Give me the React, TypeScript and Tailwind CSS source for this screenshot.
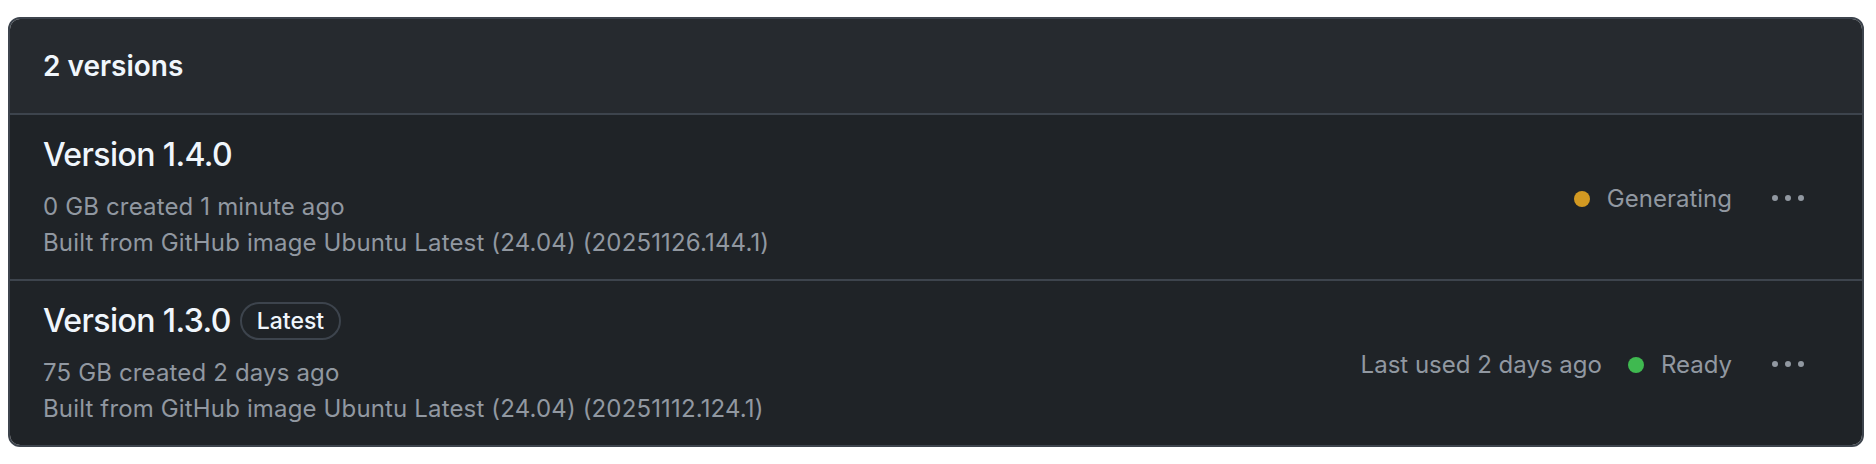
import React from "react"

type Version = {
  name: string
  latest?: boolean
  size: string
  created: string
  image: string
  lastUsed?: string
  status: "generating" | "ready"
}

const versions: Version[] = [
  {
    name: "Version 1.4.0",
    size: "0 GB",
    created: "1 minute ago",
    image: "Built from GitHub image Ubuntu Latest (24.04) (20251126.144.1)",
    status: "generating",
  },
  {
    name: "Version 1.3.0",
    latest: true,
    size: "75 GB",
    created: "2 days ago",
    image: "Built from GitHub image Ubuntu Latest (24.04) (20251112.124.1)",
    lastUsed: "Last used 2 days ago",
    status: "ready",
  },
]

function KebabIcon() {
  return (
    <svg width="32" height="32" viewBox="0 0 16 16" fill="#9198a1" aria-hidden="true">
      <path d="M8 9a1.5 1.5 0 1 0 0-3 1.5 1.5 0 0 0 0 3ZM1.5 9a1.5 1.5 0 1 0 0-3 1.5 1.5 0 0 0 0 3Zm13 0a1.5 1.5 0 1 0 0-3 1.5 1.5 0 0 0 0 3Z" />
    </svg>
  )
}

function VersionRow({ v }: { v: Version }) {
  return (
    <div className="flex items-center border-t-2 border-[#3d444d] bg-[#1f2327] pl-[33px] pr-[58px] pt-[16px] pb-[18px]">
      <div className="flex-1">
        <div className="flex h-[48px] items-center gap-[9px]">
          <span className="text-[32px] font-medium leading-[48px] tracking-[-0.6px] text-[#f0f6fc]">{v.name}</span>
          {v.latest && (
            <span className="rounded-full border-2 border-[#3d444d] px-[15px] text-[23px] font-medium leading-[34px] text-[#f0f6fc]">
              Latest
            </span>
          )}
        </div>
        <div className="mt-[10px] text-[24px] leading-[36px] tracking-[0.15px] text-[#9198a1]">
          <div>
            {v.size} created {v.created}
          </div>
          <div>{v.image}</div>
        </div>
      </div>
      <div className="flex items-center pt-[5px] text-[24px] leading-[36px] text-[#9198a1]">
        {v.lastUsed && <span className="mr-[26px]">{v.lastUsed}</span>}
        <span
          className={
            v.status === "ready"
              ? "h-[16px] w-[16px] rounded-full bg-[#3fb950]"
              : "h-[16px] w-[16px] rounded-full bg-[#d29922]"
          }
        />
        <span className="ml-[17px]">{v.status === "ready" ? "Ready" : "Generating"}</span>
        <span className="ml-[40px] flex items-center">
          <KebabIcon />
        </span>
      </div>
    </div>
  )
}

export default function App() {
  return (
    <div className="min-h-[464px] bg-white pl-[8px] pr-[12px] pt-[17px] font-['Inter',sans-serif]">
      <div className="overflow-hidden rounded-[12px] border-2 border-[#3d444d]">
        <div className="flex h-[94px] items-center bg-[#262a2f] px-[33px]">
          <span className="text-[28px] font-semibold text-[#f0f6fc]">2 versions</span>
        </div>
        {versions.map((v) => (
          <VersionRow key={v.name} v={v} />
        ))}
      </div>
    </div>
  )
}
